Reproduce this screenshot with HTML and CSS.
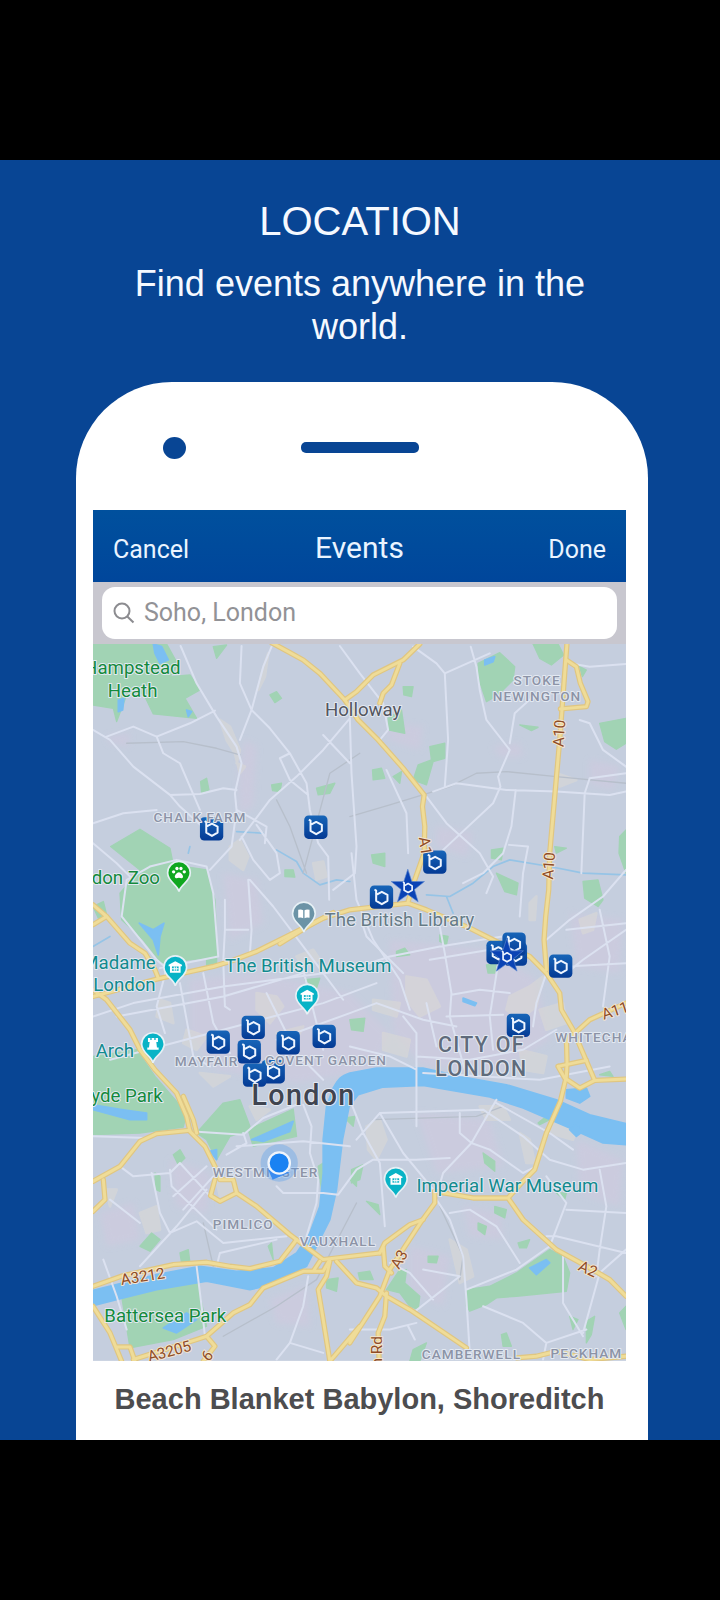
FILE: index.html
```html
<!DOCTYPE html>
<html lang="en">
<head>
<meta charset="utf-8">
<meta name="viewport" content="width=device-width, initial-scale=1">
<title>Location</title>
<link rel="stylesheet" href="styles.css">
</head>
<body>
<main class="promo">
  <header class="intro">
    <h1 class="intro-title">LOCATION</h1>
    <p class="intro-text">Find events anywhere in the world.</p>
  </header>
  <section class="phone">
    <div class="phone-top">
      <span class="camera"></span>
      <span class="speaker"></span>
      <span></span>
    </div>
    <div class="screen">
      <nav class="bar">
        <button class="bar-button" type="button">Cancel</button>
        <h2 class="bar-title">Events</h2>
        <button class="bar-button bar-button-end" type="button">Done</button>
      </nav>
      <div class="search">
        <label class="search-box">
          <svg class="search-icon" viewBox="0 0 22 22" role="img" aria-label="Search"><circle cx="9" cy="9" r="7.5"/><path d="M14.3 14.5 20.5 20.5"/></svg>
          <input class="search-input" type="text" placeholder="Soho, London">
        </label>
      </div>
      <svg class="map" viewBox="9 12 1600 2152" role="img" aria-label="Map of London">
        <defs>
          <linearGradient id="tile" x1="0" y1="0" x2="0" y2="1"><stop offset="0" stop-color="#1765b8"/><stop offset="1" stop-color="#043a94"/></linearGradient>
          <filter id="soft" x="-20%" y="-20%" width="140%" height="140%"><feGaussianBlur stdDeviation="9"/></filter>
          <g id="marker">
            <rect x="-35" y="-35" width="70" height="70" rx="13" fill="url(#tile)"/>
            <path d="M-21-23-16-20V11L1 21 18 11V-7L1-16-16-7" fill="none" stroke="#eef5ff" stroke-width="6" stroke-linejoin="round"/>
          </g>
          <g id="star">
            <path d="M0-54 12-17H50L20 7 31 44 0 22-31 44-20 7-50-17H-12Z" fill="#0a43b5" stroke="#5b86cf" stroke-width="2"/>
            <path d="M-14-16-11-13V9L1 16 13 9V-4L1-11-11-4" fill="none" stroke="#eef5ff" stroke-width="5" stroke-linejoin="round"/>
          </g>
          <path id="pin" d="M0 54C-5 32-34 26-34-2A34 34 0 1 1 34-2C34 26 5 32 0 54Z" stroke="#e6f0f5" stroke-width="5"/>
          <g id="museum">
            <use href="#pin" fill="#08b3c6"/>
            <path d="M-20-5V-9L0-20 20-9V-5ZM-16-5H16V15H-16Z" fill="#fff"/>
            <path d="M-10-4H10V9H-10Z" fill="#08b3c6"/><path d="M-3-4V9M3-4V9M-10 3H10" stroke="#fff" stroke-width="3"/>
          </g>
          <g id="major">
            <path d="M545 8 600 38 640 60 690 100 765 180 805 240 865 300 940 385 1003 465 998 500 1005 560 1003 640 975 720 955 785"/>
            <path d="M765 180 800 155 850 105 940 60 990 12M930 70 905 135 880 160 870 190"/>
            <path d="M1432 8 1425 100 1410 300 1395 470 1380 640 1377 750 1368 830 1363 900 1370 990"/>
            <path d="M1430 60 1460 80 1472 130 1495 185 1490 200 1412 207"/>
            <path d="M9 1070 200 1018 370 980 420 965 500 935 600 885 700 835 780 810 955 790 1010 810 1140 865 1220 905 1320 950 1370 1000 1410 1060 1415 1110 1450 1170 1480 1240 1515 1322 1609 1318"/>
            <path d="M570 912 650 862 730 818M9 795 50 830 120 910 165 940 195 990 205 1015M50 830 9 855"/>
            <path d="M9 1050 50 1080 120 1170 150 1230 195 1290 260 1360 290 1430 300 1475 345 1520 375 1580 390 1620 430 1620 440 1660 500 1700 600 1785 700 1860 870 1840"/>
            <path d="M280 1370 310 1440 320 1480M9 1625 90 1580 150 1505 200 1482 300 1472M375 1620 362 1668 390 1685 440 1660M40 1620 45 1680 9 1715"/>
            <path d="M9 1940 100 1908 250 1875 350 1868 420 1880 480 1887 570 1865 605 1820 620 1800"/>
            <path d="M350 2090 430 2020 480 1995 520 1945 640 1895 700 1895 720 1860M690 1865 670 1895M350 2090 320 2100 130 2160M350 2090 375 2120 340 2165M9 2000 60 2080 95 2165M80 2122 120 2122 135 2165"/>
            <path d="M720 1865 710 1910 685 1950 700 2040 720 2165 810 2060M780 2110 870 1970 900 1890 995 1745 1035 1690 1035 1655"/>
            <path d="M870 1840 885 1810 960 1755 1000 1740M880 1820 885 1880 905 1900M740 1865 800 1930 860 1945 890 1970 960 2010 1130 2125M890 1960 885 2030 865 2080 868 2165"/>
            <path d="M1035 1655 1150 1675 1255 1675 1300 1740 1400 1830 1500 1885 1560 1920 1609 1970M1255 1675 1300 1625 1335 1590 1370 1480 1412 1385 1430 1310 1432 1270 1430 1190"/>
            <path d="M1405 1280 1490 1262M1515 1322 1470 1345 1425 1315 1405 1280M1445 1190 1500 1140 1609 1090M1280 2155 1340 2150 1400 2135 1500 2160 1609 2150"/>
          </g>
        </defs>
        <rect class="land" x="9" y="12" width="1600" height="2152"/>
        <g class="mauve" filter="url(#soft)">
          <path d="M465 300 500 320 490 500 450 520 445 400ZM50 290 120 280 115 320 60 310ZM1210 320 1290 310 1300 350 1230 350ZM890 250 1000 260 990 330 900 300ZM1040 560 1150 580 1130 650 1040 620ZM1500 360 1590 380 1570 450 1500 430ZM300 1020 500 1000 780 1060 900 1180 850 1290 620 1330 380 1290 300 1180ZM900 900 1200 930 1340 1020 1380 1200 1230 1290 1000 1280 910 1180ZM400 700 500 720 520 850 420 900ZM240 1560 360 1600 350 1720 260 1700ZM540 1980 650 1940 660 2060 560 2050ZM980 1420 1200 1440 1240 1580 1040 1600ZM1460 1500 1600 1560 1590 1700 1470 1660ZM960 1820 1080 1850 1060 2000 960 1950ZM1120 1700 1230 1720 1240 1800 1140 1790ZM30 1720 130 1690 150 1800 50 1820ZM1440 820 1600 840 1590 1000 1460 980Z"/>
        </g>
        <g class="built">
          <path d="M515 100 535 40 525 110 505 150ZM390 240 420 260 450 330 440 370 465 380 450 400 435 340 410 300ZM420 620 450 600 475 650 460 690 420 660ZM670 670 700 665 710 710 680 720ZM500 1060 560 1070 580 1100 540 1150 500 1110ZM620 950 670 930 690 960 640 980ZM210 1080 240 1090 250 1150 200 1130ZM290 1170 350 1190 320 1230 280 1210ZM950 1010 1010 1020 1050 1100 990 1130 950 1080ZM850 1080 930 1090 920 1130 850 1110ZM1260 1070 1320 1040 1360 1010 1340 1100 1290 1140 1250 1110ZM1350 1110 1420 1090 1430 1150 1370 1170ZM1320 790 1340 770 1335 840 1320 840ZM1470 840 1520 820 1510 870 1480 880ZM880 1180 960 1200 950 1250 880 1230ZM1290 1230 1370 1250 1360 1300 1300 1290ZM1390 1430 1460 1470 1450 1500 1380 1480ZM1290 1480 1320 1500 1335 1570 1310 1570ZM830 1460 870 1440 890 1500 860 1560 835 1530ZM1170 1400 1240 1400 1260 1440 1190 1440ZM150 1720 200 1700 210 1770 170 1780ZM380 1620 420 1610 440 1650 390 1670ZM1080 1800 1130 1830 1150 1910 1110 1930ZM1400 400 1460 420 1410 440ZM50 1650 80 1650 60 1700ZM560 1180 640 1160 620 1200ZM330 1300 420 1310 370 1340ZM480 1400 540 1410 500 1440Z"/>
        </g>
        <g class="park">
          <path d="M9 12H230L265 75 240 110 300 105 330 150 285 175 320 235 190 222 160 160 110 165 80 245 70 205 9 195ZM370 20 410 15 380 55ZM62 620 150 568 240 625 250 675 350 690 375 780 382 950 215 970 160 900 95 840 90 760 150 690ZM332 425 350 415 357 450 335 458ZM545 435 575 430 570 455 548 452ZM680 445 735 430 720 460 685 465ZM540 165 560 155 575 175 555 188ZM585 690 610 690 615 712 585 710Z"/>
          <path d="M1165 70 1230 38 1275 80 1270 120 1225 165 1190 185 1168 120ZM1330 12H1405L1422 45 1385 75 1350 55ZM1470 80 1490 90 1478 110ZM1530 250 1609 235V310L1580 328 1545 305ZM1290 255 1345 262 1325 272ZM895 235 935 210 945 280 895 270ZM940 140 970 140 965 170 942 165ZM1020 320 1065 310 1065 355 1030 365 1010 435 970 420 985 375 1025 360ZM848 390 875 385 885 415 850 420ZM910 410 935 395 930 430ZM1205 630 1240 625 1235 660 1205 655ZM845 645 885 640 885 680 850 670ZM1590 590 1609 570V700L1588 640ZM1220 700 1285 730 1280 765 1245 755ZM1480 725 1525 720 1540 780 1525 800 1485 775ZM1395 620 1430 625 1400 640ZM1050 885 1075 890 1070 915 1050 905ZM920 935 945 925 960 945 920 950ZM780 1140 825 1135 820 1175 785 1170ZM1190 975 1220 970 1215 1000 1195 1000ZM645 1020 690 1015 680 1045ZM350 960 380 950 380 975 350 980ZM9 800 40 785 50 825 25 835Z"/>
          <path d="M9 1250 140 1230 195 1310 290 1420 280 1462 150 1480 9 1485ZM320 1480 400 1390 450 1380 480 1460 470 1475 420 1490 380 1560 350 1500ZM475 1470 610 1408 620 1490 490 1520ZM250 1545 270 1530 285 1555 265 1575ZM150 1820 185 1780 210 1800 180 1835ZM95 1970 320 1920 350 2060 250 2100 120 2125ZM195 1600 210 1610 210 1655 198 1650ZM535 1820 545 1810 550 1860ZM270 1840 295 1830 300 1870 275 1870ZM710 1920 745 1915 740 1955 710 1945ZM685 1580 700 1570 695 1650ZM765 1435 795 1430 790 1460ZM785 1590 820 1575 810 1620 785 1630ZM780 1620 800 1590 800 1640Z"/>
          <path d="M930 1890 950 1890 945 1930 990 1970 985 2010 960 2000 930 1960 890 1950ZM1130 1950 1200 1940 1280 1900 1380 1830 1420 1850 1440 1900 1430 1955 1280 1970 1220 1975 1190 1995 1140 2015 1130 2000ZM1180 1540 1215 1565 1215 1595 1185 1570ZM830 1685 865 1695 870 1725ZM1165 1750 1190 1760 1185 1785 1165 1770ZM1215 1700 1250 1710 1245 1735 1215 1720ZM1285 1810 1320 1800 1310 1825 1290 1825ZM1015 1850 1045 1850 1040 1870 1015 1868ZM1400 1660 1430 1660 1425 1680ZM1235 2085 1250 2080 1265 2120 1240 2120ZM1490 2045 1515 2030 1505 2085 1490 2110ZM970 2130 1010 2110 990 2165 960 2165ZM805 1900 840 1895 850 1920 810 1920ZM1440 2030 1465 2040 1450 2070ZM1590 2020 1609 2000V2070ZM1530 1305 1560 1295 1570 1310ZM1345 1450 1370 1430 1380 1440 1350 1455Z"/>
        </g>
        <g class="water">
          <path d="M9 1952 200 1905 330 1880 440 1895 550 1885 620 1840 660 1780 690 1700 700 1600 700 1500 710 1400 730 1345C745 1320 750 1310 780 1300L860 1285 1000 1285 1120 1312 1250 1335 1400 1380 1500 1425 1609 1452V1515L1540 1510 1440 1465 1300 1405 1200 1372 1000 1337 880 1342 805 1365 778 1400 758 1500 740 1650 720 1740 690 1800 650 1880 550 1935 480 1950 350 1925 200 1950 100 1975 9 1998Z"/>
          <path d="M148 850 190 870 222 850 210 890 205 945 190 900ZM190 12 215 20 235 60 210 70 195 40ZM85 180 102 175 98 210 85 215ZM290 210 305 215 295 230ZM9 1395 100 1410 170 1420 170 1440 120 1440 9 1410ZM485 1500 610 1445 600 1475 520 1505ZM360 1535 380 1530 380 1560ZM220 2065 290 2020 320 2040 260 2080ZM1185 60 1215 50 1210 65 1185 75ZM1320 1885 1370 1860 1380 1870 1340 1905ZM1120 1075 1160 1090 1155 1098 1120 1085ZM1430 1350 1490 1345 1500 1370 1470 1390 1430 1375ZM1440 1470 1460 1450 1480 1475 1460 1490Z"/>
        </g>
        <g class="stream">
          <path d="M560 630 620 665 640 700 690 735 740 720 780 725M1010 765 1080 770 1150 730 1210 680 1260 660 1380 680 1480 700 1609 705M1070 770 1090 820M9 920 60 890M440 575 520 580M295 640 300 620"/>
        </g>
        <g class="rail">
          <path d="M110 310 280 305 380 325 450 345M780 530 900 495 1080 440 1160 400 1250 395 1400 410 1609 430M640 700 720 400 810 340M560 480 600 560 650 700M400 2090 560 2000 680 1920 800 1690M340 1750 370 1880M1050 1700 1120 1850 1110 1920M850 1440 1160 1430 1240 1400 1380 1480"/>
        </g>
        <g class="minor">
          <path d="M272 18 320 130 380 230 440 320 455 370 435 460 440 510 425 620 360 690M455 18 450 130 485 210 450 300M545 20 520 80 485 210 540 265 600 340 650 430 660 510 685 610 715 650 718 780M9 270 60 300 130 380 240 465 270 500 360 580M375 212 300 250 200 290 130 260 50 290M200 290 220 340 270 370 300 440 330 510M240 465 330 462 400 445 440 450M9 550 100 520 200 510M780 235 700 330 620 410 540 480 450 600M600 340 570 355 600 420 655 465M700 285 780 370M780 235 785 400 800 620 795 700 730 750M9 610 80 670 130 720M440 510 530 560 525 610M455 590 490 660 540 720 570 700 560 640 500 555"/>
          <path d="M750 18 810 100 880 190 895 270 870 300M970 20 1040 70 1065 100 1200 40M1065 100 1075 300 1065 440M1143 20 1160 80 1170 150 1190 240 1260 330 1225 410 1232 440 1210 490 1060 630M1030 455 1100 430 1250 450 1400 455 1560 465 1609 455M1260 310 1275 220 1330 170M1278 450 1265 560 1240 640 1180 700 1120 730M1010 470 1070 550 1170 640 1210 710 1190 760M1609 400 1500 415 1485 460 1475 700M1470 240 1500 250 1540 330 1609 380M1440 70 1500 80 1609 72M1258 615 1315 620 1300 700 1290 830M890 390 950 520 955 640M1609 690 1540 770 1440 840 1370 900M785 640 800 780 850 900 930 1020 960 1110"/>
          <path d="M180 680 110 720 95 830 200 960 230 985 200 1100 225 1180M180 680 260 660 350 680 370 760 385 950 210 985M405 780V870H475M405 870 400 965 405 1100 420 1110M475 720 485 870 480 940M480 720 550 800 640 920 700 1000 760 1080M9 1130 130 1090 400 1040 780 990 900 950 1050 920 1300 880M80 1130 400 1070 640 1000M60 1260 400 1170 700 1090 860 1030M270 1030 310 1250 360 1280M340 1000 370 1150 420 1240M640 990 700 1230M530 1060 620 1240 700 1320M560 1200 780 1120 860 1090 1000 1140 1100 1160M940 1130 980 1180V1460M820 860 830 890 940 1000M1050 860 1065 940 1085 1060 1080 1130 1125 1290M1020 960 1200 930M1230 940 1200 1130 1210 1230M1085 1065 1170 1050 1260 1060M1070 1130 1240 1125M980 1250 1140 1260 1300 1230 1400 1170M1010 1090 1040 1220M1370 1000 1340 1090 1330 1160M1430 980 1609 970M1430 870 1609 850M1530 810 1560 950 1540 1100M1000 1300 1350 1320 1560 1280M1609 870 1480 960 1430 1000M780 1220 900 1250 980 1290"/>
          <path d="M300 1475 460 1485 520 1435 620 1395M440 1520 640 1505 780 1520M410 1545 470 1510 460 1480M640 1395 665 1460 660 1540 685 1620 680 1690 650 1790M700 1660 745 1665 800 1590 850 1560 980 1560 1080 1555M9 1490 170 1495M90 1580 130 1610 240 1600 270 1570 370 1680M185 1600 210 1720 240 1780 320 1745 400 1810 590 1790M60 1680 150 1750M240 1590 245 1640 380 1770M250 1670 350 1580M280 1710 370 1610M150 1880 260 1760 350 1650M40 1860 80 1970 110 2070M320 1880 335 2000 345 2090M380 1880 390 1840 560 1800M560 1640 580 1660 700 1660M655 1910 640 2000 600 2110 560 2160M600 2110 700 2140"/>
          <path d="M800 1500 870 1420 940 1540 1035 1655M780 1380 820 1480 870 1570 885 1760M870 1420 1180 1410 1300 1490 1380 1560 1480 1590 1609 1570M1110 1420 1110 1480 1145 1510 1220 1380M1145 1510 1060 1600 1040 1670M1145 1510 1200 1530 1300 1600 1340 1580M1040 1680 1080 1740 1120 1850 1130 1980 1140 2140M1080 1720 1140 1710 1220 1760 1290 1870M1130 1950 1280 1890 1380 1820 1430 1690 1370 1610M1430 1710 1609 1720M1530 1590 1550 1700 1530 1830 1520 1910M1609 1830 1530 1900 1480 2080M1420 1840V1990L1480 2090M1370 1790 1400 1790 1609 1840M780 2070 900 2070 980 2050M970 2020 1110 1910 1000 1890M1030 1980 960 1900 900 1870M1180 2000 1300 2050 1370 2110 1490 2070M955 2060 975 2100M1370 2110 1360 2160M1220 1390 1380 1480 1450 1530"/>
        </g>
        <use href="#major" class="major-edge"/>
        <use href="#major" class="major-fill"/>
        <use href="#museum" x="256" y="984"/>
        <use href="#museum" x="652" y="1070"/>
        <use href="#museum" x="918" y="1620"/>
        <g transform="translate(189 1215)">
          <use href="#pin" fill="#08b3c6"/>
          <path d="M-15-20H-8V-14H-4V-20H4V-14H8V-20H15V-8H10L12 8H17V15H-17V8H-12L-10-8H-15Z" fill="#fff"/>
        </g>
        <g transform="translate(267 701)">
          <use href="#pin" fill="#0fa71f"/>
          <g fill="#fff"><circle cx="-16" cy="-5" r="5"/><circle cx="-6" cy="-15" r="5"/><circle cx="6" cy="-15" r="5"/><circle cx="16" cy="-5" r="5"/><path d="M0-4C6-4 14 6 12 11S4 13 0 13-10 16-12 11-6-4 0-4Z"/></g>
        </g>
        <g transform="translate(642 823)">
          <use href="#pin" fill="#6b93a6"/>
          <path d="M-17-13Q-8-16-2-12V12Q-8 8-17 11ZM17-13Q8-16 2-12V12Q8 8 17 11Z" fill="#fff"/>
        </g>
        <use href="#marker" x="365" y="567"/>
        <use href="#marker" x="678" y="562"/>
        <use href="#marker" x="1035" y="667"/>
        <use href="#marker" x="875" y="772"/>
        <use href="#marker" x="1413" y="979"/>
        <use href="#marker" x="1286" y="1157"/>
        <use href="#marker" x="385" y="1207"/>
        <use href="#marker" x="490" y="1163"/>
        <use href="#marker" x="478" y="1236"/>
        <use href="#marker" x="595" y="1209"/>
        <use href="#marker" x="703" y="1190"/>
        <use href="#marker" x="550" y="1296"/>
        <use href="#marker" x="494" y="1306"/>
        <use href="#marker" x="1225" y="938"/>
        <use href="#marker" x="1277" y="943"/>
        <use href="#marker" x="1273" y="913"/>
        <use href="#star" x="954" y="742"/>
        <use href="#star" x="1251" y="950"/>
        <g class="label label-park">
          <text x="272" y="102" text-anchor="end">Hampstead</text><text x="128" y="170" text-anchor="middle">Heath</text>
          <text x="210" y="731" text-anchor="end">don Zoo</text><text x="218" y="1388" text-anchor="end">yde Park</text>
          <text x="226" y="2046" text-anchor="middle">Battersea Park</text>
        </g>
        <g class="label label-sight">
          <text x="197" y="988" text-anchor="end">Madame</text><text x="197" y="1053" text-anchor="end">London</text>
          <text x="132" y="1251" text-anchor="end">Arch</text>
          <text x="655" y="998" text-anchor="middle">The British Museum</text>
          <text x="1253" y="1658" text-anchor="middle">Imperial War Museum</text>
        </g>
        <text class="label label-library" x="929" y="858" text-anchor="middle">The British Library</text>
        <text class="label label-town" x="820" y="227" text-anchor="middle">Holloway</text>
        <g class="label label-area">
          <text x="1342" y="136" text-anchor="middle">STOKE</text><text x="1342" y="182" text-anchor="middle">NEWINGTON</text>
          <text x="330" y="547" text-anchor="middle">CHALK FARM</text>
          <text x="350" y="1280" text-anchor="middle">MAYFAIR</text><text x="709" y="1277" text-anchor="middle">COVENT GARDEN</text>
          <text x="1397" y="1206">WHITECHA</text><text x="527" y="1611" text-anchor="middle">WESTMINSTER</text>
          <text x="460" y="1769" text-anchor="middle">PIMLICO</text><text x="744" y="1820" text-anchor="middle">VAUXHALL</text>
          <text x="1145" y="2157" text-anchor="middle">CAMBERWELL</text><text x="1490" y="2154" text-anchor="middle">PECKHAM</text>
        </g>
        <g class="label label-city">
          <text x="1175" y="1237" text-anchor="middle">CITY OF</text><text x="1175" y="1310" text-anchor="middle">LONDON</text>
        </g>
        <text class="label label-capital" x="641" y="1396" text-anchor="middle">London</text>
        <g class="label label-road">
          <text transform="translate(1408 280) rotate(-86)" y="16" text-anchor="middle">A10</text>
          <text transform="translate(1377 678) rotate(-86)" y="16" text-anchor="middle">A10</text>
          <text transform="translate(1007 618) rotate(82)" y="16" text-anchor="middle">A1</text>
          <text transform="translate(1576 1112) rotate(-18)" y="16" text-anchor="middle">A11</text>
          <text transform="translate(158 1910) rotate(-9)" y="16" text-anchor="middle">A3212</text>
          <text transform="translate(238 2135) rotate(-15)" y="16" text-anchor="middle">A3205</text>
          <text transform="translate(352 2148) rotate(-50)" y="16" text-anchor="middle">6</text>
          <text transform="translate(928 1859) rotate(-60)" y="16" text-anchor="middle">A3</text>
          <text transform="translate(1495 1888) rotate(25)" y="16" text-anchor="middle">A2</text>
          <text transform="translate(862 2090) rotate(-90)" y="16" text-anchor="end">n Rd</text>
        </g>
        <circle cx="568" cy="1570" r="56" fill="#4a97ee" opacity=".32"/>
        <path d="M535 1590 548 1620 600 1598Z" fill="#3b8cf0"/>
        <circle cx="568" cy="1570" r="32" fill="#1a82f2" stroke="#eff4fb" stroke-width="7"/>
      </svg>
    </div>
    <p class="caption">Beach Blanket Babylon, Shoreditch</p>
  </section>
</main>
</body>
</html>
```
FILE: styles.css
```css
* { box-sizing: border-box; }

body {
  margin: 0;
  padding: 160px 0;
  background: #000;
  font-family: "Liberation Sans", Arial, sans-serif;
}

.promo {
  padding: 37px 72px 0 76px;
  background: #084594;
  color: #f5f9ff;
}

.intro {
  padding-right: 4px;
  text-align: center;
}

.intro-title {
  margin: 0;
  font-size: 40px;
  line-height: 48px;
  font-weight: 400;
}

.intro-text {
  max-width: 480px;
  margin: 17px auto 0;
  font-size: 36px;
  line-height: 43px;
}

.phone {
  margin-top: 34px;
  padding: 0 22px 1px 17px;
  border-radius: 96px 96px 0 0;
  background: #fff;
}

.phone-top {
  display: grid;
  grid-template-columns: 1fr 118px 1fr;
  align-items: center;
  height: 128px;
  padding-top: 3px;
}

.camera {
  width: 23px;
  height: 22px;
  margin-left: 70px;
  border-radius: 50%;
  background: #084594;
}

.speaker {
  height: 11px;
  border-radius: 5px;
  background: #084594;
}

.bar {
  display: grid;
  grid-template-columns: 1fr auto 1fr;
  align-items: center;
  padding: 4px 20px 0;
  height: 72px;
  background: linear-gradient(#00509d, #00469b);
  font-family: Roboto, sans-serif;
  color: #eaf4ff;
}

.bar-title {
  margin: 0;
  font-size: 30px;
  line-height: 36px;
  font-weight: 400;
}

.bar-button {
  justify-self: start;
  padding: 4px 0 0;
  border: 0;
  background: none;
  font: inherit;
  font-size: 25px;
  line-height: 30px;
  color: inherit;
}

.bar-button-end { justify-self: end; }

.search {
  padding: 5px 9px;
  background: #c8c7cf;
}

.search-box {
  display: flex;
  align-items: center;
  gap: 9px;
  height: 52px;
  padding: 0 11px;
  border-radius: 13px;
  background: #fff;
}

.search-icon {
  flex: none;
  width: 22px;
  height: 22px;
  fill: none;
  stroke: #8c8c90;
  stroke-width: 2;
}

.search-input {
  flex: 1;
  min-width: 0;
  padding: 0;
  border: 0;
  outline: 0;
  background: none;
  font-family: Roboto, sans-serif;
  font-size: 25px;
  line-height: 30px;
}

.search-input::placeholder { color: #929296; opacity: 1; }

.map {
  display: block;
  width: 100%;
}

.land { fill: #c5cede; }
.mauve { fill: #d0c9df; opacity: .55; }
.built { fill: #dad9d6; opacity: .6; stroke: #dad9d6; stroke-width: 8; stroke-linejoin: round; }
.park { fill: #a1d3b4; stroke: #a1d3b4; stroke-width: 4; stroke-linejoin: round; }
.water { fill: #7bbff2; stroke: #7bbff2; stroke-width: 5; stroke-linejoin: round; }
.stream, .rail, .minor, .major-edge, .major-fill { fill: none; stroke-linejoin: round; stroke-linecap: round; }
.stream { stroke: #96c4e6; stroke-width: 5; }
.rail { stroke: #b7bfcb; stroke-width: 4; }
.minor { stroke: #dbe1f0; stroke-width: 6; }
.major-edge { stroke: #e0c681; stroke-width: 16; }
.major-fill { stroke: #efdc98; stroke-width: 9; }

.label {
  font-family: Roboto, sans-serif;
  font-size: 56px;
  paint-order: stroke;
  stroke: #e3e9f2;
  stroke-width: 6px;
  stroke-linejoin: round;
}

.label-park { fill: #138a3c; }
.label-sight { fill: #128a8e; }
.label-library { fill: #667b86; }
.label-town { fill: #53565f; }
.label-area { font-size: 41px; font-weight: 500; letter-spacing: 3px; fill: #8c93a6; }
.label-city { font-size: 64px; font-weight: 500; letter-spacing: 4px; fill: #5f6b7b; }
.label-capital { font-size: 86px; font-weight: 500; letter-spacing: 4px; fill: #3f4450; }
.label-road { font-size: 46px; fill: #8f4c26; stroke: #f3e5cf; }

.caption {
  margin: 20px 0 22px;
  font-size: 29px;
  line-height: 36px;
  font-weight: 700;
  text-align: center;
  color: #4d4d4f;
}
```
